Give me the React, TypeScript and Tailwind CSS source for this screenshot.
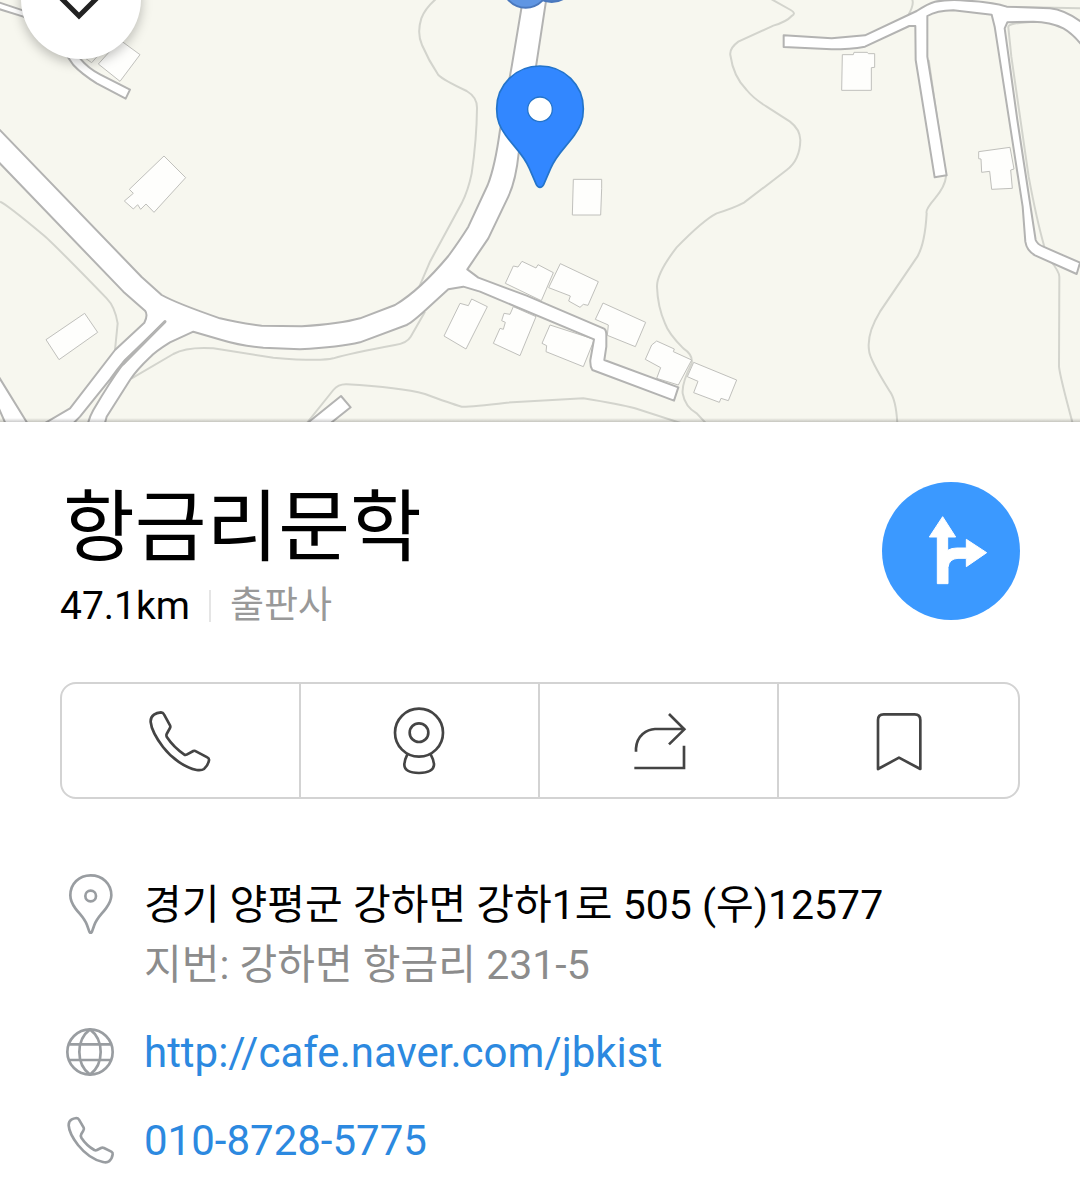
import type { ReactNode } from 'react';

interface IconProps {
  viewBox: string;
  className: string;
  children: ReactNode;
}

// Map drawing units are a third of a pixel.
const contours = [
  'M1310 -5 Q1275 25 1264 55 Q1250 100 1266 135 Q1285 180 1315 225 Q1330 240 1400 273 Q1432 292 1431 325 Q1430 420 1415 520 Q1405 570 1385 610 L1290 785 L1258 860',
  'M0 605 Q20 613 130 705 Q160 730 320 895 Q345 920 353 970 L345 1050',
  'M395 1135 L520 1062 Q560 1040 640 1045 L820 1073 Q960 1085 1000 1075 Q1050 1060 1185 1035 Q1220 1030 1232 1010 L1275 935',
  'M920 1270 L1000 1170 Q1015 1152 1040 1153 Q1200 1162 1275 1182 Q1350 1210 1385 1220 Q1410 1221 1520 1208 L1750 1195 Q1860 1213 1905 1225 L2045 1270',
  'M2315 -2 L2372 30 Q2390 40 2375 48 Q2360 65 2320 77 L2215 125 Q2188 145 2191 165 Q2200 230 2240 270 Q2260 295 2300 320 L2370 365 Q2400 388 2401 420 Q2400 480 2360 510 L2232 608 Q2200 625 2150 640 Q2110 660 2030 742 Q1970 820 1971 860 Q1973 920 1995 970 Q2005 1000 2050 1045 Q2080 1065 2075 1090 Q2045 1150 2048 1180 Q2055 1220 2090 1240 L2118 1270',
  'M2725 45 Q2745 10 2735 -5',
  'M2786 180 L2818 400 L2838 530 Q2835 560 2805 595 Q2775 630 2780 640 Q2775 730 2752 770 L2640 935 Q2600 1000 2607 1050 Q2607 1075 2670 1175 Q2688 1200 2692 1270',
  'M3015 20 L3250 25',
  'M3110 65 Q3022 68 3025 82 L3034 170 L3086 530 Q3110 660 3133 740',
  'M3150 780 Q3178 815 3178 830 L3177 1100 Q3180 1130 3218 1270',
];

const buildings = [
  'M275 188 L258 176 M275 188 L318 140',
  'M360 120 L420 164 L360 244 L295 192 Z',
  'M492 468 L557 533 L462 637 L438 612 L422 628 L413 614 L400 627 L373 603 L400 580 L388 568 Z',
  'M138 1019 L254 940 L293 997 L177 1079 Z',
  'M1720 538 L1805 538 L1805 565 L1802 645 L1717 645 Z',
  'M1540 798 L1554 801 L1566 784 L1608 804 L1614 794 L1660 818 L1624 902 L1516 850 Z',
  'M1681 791 L1795 845 L1764 916 L1750 913 L1740 922 L1706 903 L1711 888 L1646 863 Z',
  'M1380 910 L1405 917 L1415 897 L1462 920 L1398 1047 L1332 1008 Z',
  'M1540 920 L1608 950 L1560 1067 L1480 1030 L1500 985 L1510 988 L1516 967 L1505 962 L1512 940 L1530 943 Z',
  'M1650 975 L1783 1018 L1750 1100 L1638 1055 L1640 1037 L1626 1030 Z',
  'M1809 909 L1937 967 L1906 1040 L1822 1006 L1825 975 L1786 958 Z',
  'M1970 1023 L2023 1047 L2020 1055 L2075 1080 L2035 1155 L1970 1135 L1982 1103 L1936 1078 L1955 1035 Z',
  'M2081 1087 L2210 1140 L2185 1202 L2163 1195 L2158 1207 L2081 1178 L2094 1144 L2062 1130 Z',
  'M2527 164 L2560 164 L2562 157 L2602 157 L2605 161 L2624 161 L2624 202 L2614 203 L2614 271 L2525 271 Z',
  'M2936 455 L3030 442 L3042 507 L3032 510 L3037 565 L2975 568 L2969 514 L2945 517 L2943 477 L2936 476 Z',
];

const roads = [
  'M-10 380 L425 831 L485 885 Q530 910 660 955 Q710 968 785 977 L905 979 Q1020 972 1080 955 L1185 915 Q1260 870 1345 768 Q1380 720 1405 680 L1463 555 Q1485 500 1500 390 L1535 200 L1570 -10 L1640 -10 L1608 200 L1556 460 Q1548 540 1525 590 L1465 715 L1402 808 L1435 833 L1580 887 L1812 986 Q1819 990 1819 1005 L1819 1040 L1813 1080 L2035 1162 L2022 1202 L1777 1110 Q1770 1100 1771 1080 L1782 1018 L1440 875 L1390 860 L1345 868 L1290 918 Q1240 965 1220 975 L1080 1027 Q1020 1042 900 1048 L790 1043 Q720 1037 665 1020 L580 995 L510 1027 Q465 1055 450 1072 Q410 1110 390 1140 L320 1250 L312 1280 L262 1280 Q266 1255 280 1230 Q330 1145 365 1098 L400 1062 L495 965 L375 1080 Q350 1110 330 1138 L240 1250 L215 1275 L125 1275 L210 1225 L345 1050 L433 968 Q445 945 435 932 L370 875 L-10 480 Z',
  'M-10 5 L80 35 Q170 70 240 175 Q265 205 300 223 L390 269 L377 296 L290 250 Q245 222 220 195 Q150 90 70 50 L-10 25 Z',
  'M-10 1120 L80 1266 L90 1290 L25 1290 L-10 1210 Z',
  'M915 1275 L1023 1188 L1052 1222 L985 1275 Z',
  'M2351 106 L2495 115 L2595 106 L2750 33 Q2785 10 2805 5 Q2850 -3 2900 2 Q2980 6 3020 20 L3150 25 Q3200 30 3260 78 L3260 155 Q3225 105 3190 85 Q3150 65 3100 65 L3022 67 L3014 85 L3052 360 L3107 720 Q3112 733 3130 740 L3240 788 L3230 822 L3105 766 Q3080 752 3076 725 L3068 620 L2984 80 L2975 44 L2860 31 Q2810 32 2782 48 L2782 170 L2840 526 L2804 532 L2747 180 L2746 78 L2728 78 L2595 140 Q2550 148 2495 148 L2351 141 Z',
];

function MapCanvas() {
  return (
    <svg
      className="block h-full w-full"
      viewBox="0 0 3240 1266"
      preserveAspectRatio="xMidYMin slice"
      role="img"
      aria-label="지도"
    >
      <g fill="none" stroke="#d3d4cd" strokeWidth="6">
        {contours.map((d) => (
          <path key={d} d={d} />
        ))}
      </g>
      <g fill="#fefefc" stroke="#c0c0bc" strokeWidth="3">
        {buildings.map((d) => (
          <path key={d} d={d} />
        ))}
      </g>
      <g fill="#fff" stroke="#b3b3b2" strokeWidth="6" strokeLinejoin="round">
        {roads.map((d) => (
          <path key={d} d={d} />
        ))}
      </g>
      <path d="M495 965 L370 1090" stroke="#b3b3b2" strokeWidth="9" strokeLinecap="round" />
      <g stroke="#4a78bd" strokeWidth="6">
        <circle cx="1655" cy="-64" r="70" fill="#4f7fc6" />
        <circle cx="1577" cy="-47" r="70" fill="#6096e3" />
      </g>
      <path
        d="M1620 198 C1548 198 1490 254 1490 326 C1490 362 1500 382 1517 406 C1545 445 1568 460 1588 505 L1609 554 Q1613 562 1620 562 Q1627 562 1631 554 L1652 505 C1672 460 1695 445 1723 406 C1740 382 1750 362 1750 326 C1750 254 1692 198 1620 198 Z"
        fill="#3287ff"
        stroke="#2474ca"
        strokeWidth="5"
      />
      <circle cx="1620" cy="328" r="37" fill="#fff" stroke="#2474ca" strokeWidth="4" />
    </svg>
  );
}

function Icon({ viewBox, className, children }: IconProps) {
  return (
    <svg
      viewBox={viewBox}
      className={className}
      fill="none"
      stroke="currentColor"
      strokeWidth="8"
      strokeLinejoin="round"
      aria-hidden="true"
    >
      {children}
    </svg>
  );
}

const actions = [
  {
    label: '전화',
    viewBox: '285 104 216 216',
    shape: (
      <path d="M333 126 Q339 126 342 132 L360 165 Q362 169 360 173 L350 191 Q348 195 351 201 Q371 231 402 252 Q406 255 410 253 L430 242 Q434 240 438 243 L472 261 Q478 264 477 270 Q474 286 462 296 Q455 301 440 299 C405 292 365 264 339 230 C318 202 304 176 302 155 Q301 141 312 133 Q320 127 333 126 Z" />
    ),
  },
  {
    label: '거리뷰',
    viewBox: '1002 105 216 216',
    shape: (
      <>
        <circle cx="1107" cy="188" r="72" />
        <circle cx="1107" cy="188" r="28" />
        <path d="M1072 253 Q1063 271 1063 285 Q1064 308 1107 309 Q1150 308 1152 285 Q1152 271 1142 253" />
      </>
    ),
  },
  {
    label: '공유',
    viewBox: '279 104 216 216',
    shape: (
      <path
        d="M318 244 V234 Q320 207 338 191 Q355 177 375 176 H462 M417 131 L463 177 L417 222 M462 226 V293 H313"
        strokeLinejoin="miter"
      />
    ),
  },
  {
    label: '저장',
    viewBox: '999 104 216 216',
    shape: <path d="M1044 296 V149 Q1044 132 1061 132 H1154 Q1171 132 1171 149 V296 L1107 262 Z" />,
  },
];

export default function App() {
  return (
    <main className="min-h-screen bg-white font-[Roboto,'Noto_Sans_CJK_KR',sans-serif] text-black">
      <section className="relative h-[422px] overflow-hidden bg-[#f7f7ef]">
        <MapCanvas />
        <button
          type="button"
          aria-label="닫기"
          className="absolute -top-[61px] left-[21px] flex size-[120px] items-center justify-center rounded-full bg-white text-[#222] shadow-[0_4px_12px_rgba(0,0,0,0.25)]"
        >
          <svg viewBox="0 0 60 60" className="size-[60px]" fill="none" stroke="currentColor" strokeWidth="5" aria-hidden="true">
            <path d="M7 26 L28 47 L49 26" />
          </svg>
        </button>
        <div className="absolute inset-x-0 bottom-0 h-1 bg-linear-to-b from-transparent to-black/20" />
      </section>

      <section className="px-[60px] pt-[60px] pb-8">
        <header className="flex items-start justify-between">
          <div>
            <h1 className="pl-[3px] text-[78px] leading-[94px]">항금리문학</h1>
            <div className="flex items-center text-[39px] leading-[60px]">
              <span>47.1km</span>
              <span className="mx-[19px] h-8 w-[2px] bg-[#e5e5e5]" />
              <span className="text-[37px] text-[#999]">출판사</span>
            </div>
          </div>
          <button
            type="button"
            aria-label="길찾기"
            className="size-[138px] shrink-0 rounded-full bg-[#3b99ff] text-white"
          >
            <svg viewBox="36 36 414 414" className="size-full" fill="currentColor" aria-hidden="true">
              <path
                d="M218 140 L257 201 H233 V241 Q245 234 260 234 H289 V208 L350 248 L289 290 V265 H264 Q237 266 234 292 V341 H202 V201 H178 Z"
                stroke="currentColor"
                strokeWidth="3"
                strokeLinejoin="round"
              />
            </svg>
          </button>
        </header>

        <div className="mt-[46px] grid h-[117px] grid-cols-4 divide-x-2 divide-[#d3d3d3] rounded-2xl border-2 border-[#d3d3d3] text-[#444]">
          {actions.map((action) => (
            <button
              key={action.label}
              type="button"
              aria-label={action.label}
              className="flex items-center justify-center"
            >
              <Icon viewBox={action.viewBox} className="size-[72px]">
                {action.shape}
              </Icon>
            </button>
          ))}
        </div>

        <div className="mt-[75px] grid gap-[27px] text-[42px] leading-[60px]">
          <div className="flex items-start gap-6">
            <Icon viewBox="30 41 180 180" className="size-[60px] shrink-0 text-[#999da1]">
              <path d="M122 45 C87 45 61 70 61 105 C61 121 67 132 76 144 C92 165 103 173 111 194 L118 214 Q122 222 126 214 L133 194 C141 173 152 165 168 144 C177 132 184 121 184 105 C184 70 157 45 122 45 Z" />
              <circle cx="122" cy="107" r="16" />
            </Icon>
            <address className="pt-px text-[41px] not-italic">
              <p>경기 양평군 강하면 강하1로 505 (우)12577</p>
              <p className="text-[#8c8c8c]">지번: 강하면 항금리 231-5</p>
            </address>
          </div>
          <div className="flex items-start gap-6">
            <Icon viewBox="30 32 180 180" className="size-[60px] shrink-0 text-[#999da1]">
              <circle cx="120" cy="122" r="68" />
              <path d="M120 54 Q88 78 88 122 Q88 166 120 190 Q152 166 152 122 Q152 78 120 54 Z M58 99 H182 M58 146 H182" />
            </Icon>
            <a href="http://cafe.naver.com/jbkist" className="pt-px text-[#2c89e0]">
              http://cafe.naver.com/jbkist
            </a>
          </div>
          <div className="flex items-start gap-6">
            <Icon viewBox="30 304 180 180" className="size-[60px] shrink-0 text-[#999da1]">
              <path d="M79 328 Q84 328 87 333 L101 357 Q103 361 100 366 L94 376 Q91 381 94 387 Q109 410 133 424 Q137 426 141 424 L153 418 Q157 416 162 418 L184 429 Q189 432 188 437 Q186 451 177 458 Q171 463 159 460 C131 454 104 434 84 409 C68 388 57 368 56 350 Q56 338 64 333 Q70 329 79 328 Z" />
            </Icon>
            <a href="tel:010-8728-5775" className="pt-px text-[#2c89e0]">
              010-8728-5775
            </a>
          </div>
        </div>
      </section>
    </main>
  );
}
